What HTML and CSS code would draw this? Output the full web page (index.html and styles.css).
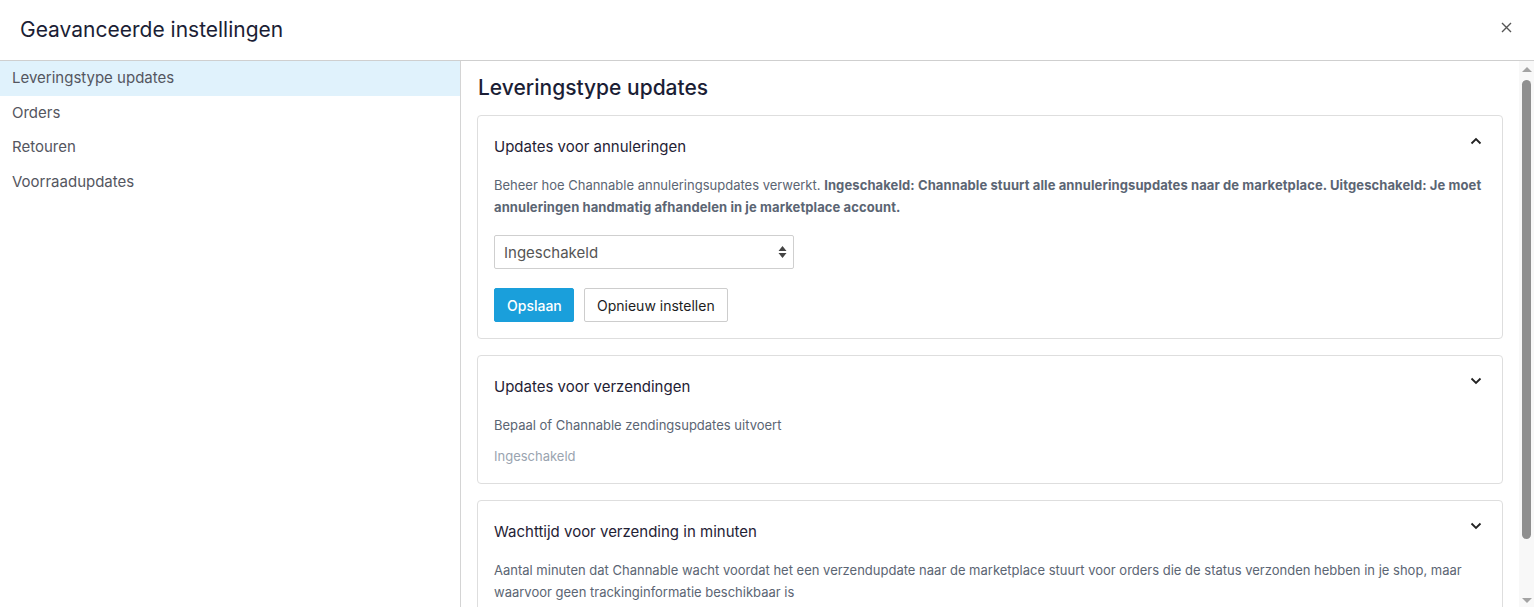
FILE: index.html
```html
<!DOCTYPE html>
<html lang="nl">
<head>
    <meta charset="UTF-8">
    <title>Geavanceerde instellingen</title>
    <link rel="stylesheet" href="styles.css">
</head>
<body>

    <div class="modal">
        <div class="modal-head">
            <h1>Geavanceerde instellingen</h1>
            <span class="close">
                <svg width="11" height="11" viewBox="0 0 11 11"><path d="M1 1L10 10M10 1L1 10" stroke="#555" stroke-width="1.4" fill="none"/></svg>
            </span>
        </div>

        <div class="modal-body">
            <ul class="side">
                <li class="active">Leveringstype updates</li>
                <li>Orders</li>
                <li>Retouren</li>
                <li>Voorraadupdates</li>
            </ul>

            <div class="main">
                <div class="content">
                    <h2>Leveringstype updates</h2>

                    <!-- annuleringen -->
                    <div class="card">
                        <div class="card-head">
                            <span>Updates voor annuleringen</span>
                            <svg class="chev" width="12" height="8" viewBox="0 0 12 8"><path d="M1.5 6.5L6 2L10.5 6.5" stroke="#222" stroke-width="1.8" fill="none"/></svg>
                        </div>
                        <p class="desc">Beheer hoe Channable annuleringsupdates verwerkt. <b>Ingeschakeld: Channable stuurt alle annuleringsupdates naar de marketplace. Uitgeschakeld: Je moet annuleringen handmatig afhandelen in je marketplace account.</b></p>
                        <div class="select">
                            <span>Ingeschakeld</span>
                            <svg width="9" height="14" viewBox="0 0 9 14"><path d="M4.5 1L8.5 6H0.5Z M4.5 13L8.5 8H0.5Z" fill="#444"/></svg>
                        </div>
                        <div class="buttons">
                            <button class="btn btn-primary">Opslaan</button>
                            <button class="btn">Opnieuw instellen</button>
                        </div>
                    </div>

                    <!-- verzendingen -->
                    <div class="card">
                        <div class="card-head">
                            <span>Updates voor verzendingen</span>
                            <svg class="chev" width="12" height="8" viewBox="0 0 12 8"><path d="M1.5 1.5L6 6L10.5 1.5" stroke="#222" stroke-width="1.8" fill="none"/></svg>
                        </div>
                        <p class="desc">Bepaal of Channable zendingsupdates uitvoert</p>
                        <p class="value">Ingeschakeld</p>
                    </div>

                    <!-- wachttijd -->
                    <div class="card">
                        <div class="card-head">
                            <span>Wachttijd voor verzending in minuten</span>
                            <svg class="chev" width="12" height="8" viewBox="0 0 12 8"><path d="M1.5 1.5L6 6L10.5 1.5" stroke="#222" stroke-width="1.8" fill="none"/></svg>
                        </div>
                        <p class="desc">Aantal minuten dat Channable wacht voordat het een verzendupdate naar de marketplace stuurt voor orders die de status verzonden hebben in je shop, maar waarvoor geen trackinginformatie beschikbaar is</p>
                        <p class="value">30</p>
                    </div>
                </div>

                <div class="scrollbar">
                    <span class="arrow-up"></span>
                    <span class="thumb"></span>
                    <span class="track"></span>
                    <span class="arrow-down"></span>
                </div>
            </div>
        </div>
    </div>

</body>
</html>
```

FILE: styles.css
```css
* {
    padding: 0;
    margin: 0;
    box-sizing: border-box;
}
html, body {
    height: 100%;
    overflow: hidden;
}
body {
    font-family: Inter, "Noto Sans", sans-serif;
    background-color: #fff;
    color: #1d2033;
}
ul {
    list-style: none;
}

.modal {
    height: 100%;
    display: flex;
    flex-direction: column;
}
.modal-head {
    height: 61px;
    border-bottom: 1px solid #cfcfcf;
    display: flex;
    align-items: center;
    justify-content: space-between;
    padding: 0 22px 2px 20px;
}
.modal-head h1 {
    font-size: 21px;
    font-weight: 400;
    color: #1b1e35;
}
.close {
    display: flex;
    margin-top: -4px;
}

.modal-body {
    flex: 1;
    display: flex;
    min-height: 0;
}

/* sidebar */
.side {
    width: 461px;
    flex-shrink: 0;
    border-right: 1px solid #d4d4d4;
}
.side li {
    height: 34.5px;
    line-height: 34.5px;
    padding-left: 12px;
    font-size: 15px;
    color: #545660;
}
.side li.active {
    background-color: #e0f2fc;
}

/* main */
.main {
    flex: 1;
    display: flex;
    min-width: 0;
}
.content {
    flex: 1;
    padding: 13px 16px 0 16px;
    overflow: hidden;
}
.content h2 {
    font-size: 21px;
    font-weight: 500;
    line-height: 28px;
    margin-left: 1px;
    margin-bottom: 13px;
    color: #1b1e35;
}

.card {
    border: 1px solid #dedede;
    border-radius: 4px;
    padding: 0 16px 16px 16px;
    margin-bottom: 16px;
}
.card-head {
    display: flex;
    align-items: center;
    justify-content: space-between;
    padding: 19px 0 0 0;
    height: 41px;
    font-size: 15px;
    color: #1f2235;
}
.card-head .chev {
    margin-right: 4px;
    margin-top: -10px;
}
.desc {
    margin-top: 17px;
    font-size: 13px;
    line-height: 22px;
    color: #5b6573;
}
.desc b {
    font-weight: 700;
    letter-spacing: 0.1px;
}
.value {
    margin-top: 9px;
    font-size: 13px;
    line-height: 22px;
    color: #9aa4b0;
}

.select {
    width: 300px;
    height: 34px;
    margin-top: 17px;
    border: 1px solid #cfcfcf;
    border-radius: 2px;
    display: flex;
    align-items: center;
    justify-content: space-between;
    padding: 0 6px 0 9px;
    font-size: 15px;
    color: #555;
}

.buttons {
    display: flex;
    gap: 10px;
    margin-top: 19px;
}
.btn {
    height: 34px;
    padding: 0 12px;
    font-family: Inter, "Noto Sans", sans-serif;
    font-size: 14px;
    background-color: #fff;
    border: 1px solid #cdcdcd;
    border-radius: 2px;
    color: #1d1d1d;
}
.btn-primary {
    width: 80px;
    background-color: #1a9fdb;
    border-color: #1a9fdb;
    color: #fff;
    font-weight: 500;
}

/* scrollbar */
.scrollbar {
    width: 15px;
    flex-shrink: 0;
    background-color: #f8f8f8;
    display: flex;
    flex-direction: column;
    align-items: center;
    padding: 6px 0 4px 0;
}
.arrow-up, .arrow-down {
    width: 0;
    height: 0;
    border-left: 5px solid transparent;
    border-right: 5px solid transparent;
}
.arrow-up {
    border-bottom: 5px solid #a3a3a3;
}
.arrow-down {
    border-top: 5px solid #a3a3a3;
}
.thumb {
    width: 9px;
    height: 459px;
    margin-top: 8px;
    border-radius: 5px;
    background-color: #8f8f8f;
}
.track {
    flex: 1;
}
```
